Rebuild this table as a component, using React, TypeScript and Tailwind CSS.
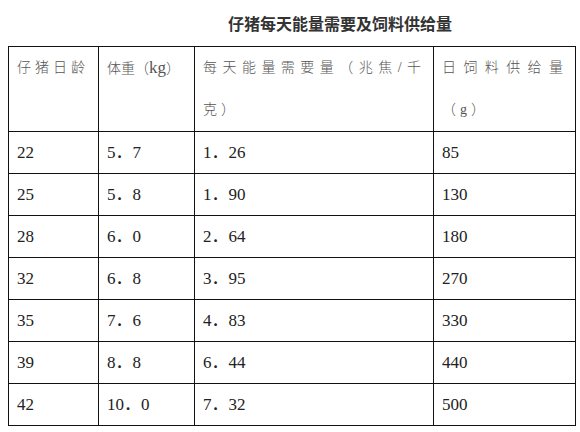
const rows = [
  ["22", "5．7", "1．26", "85"],
  ["25", "5．8", "1．90", "130"],
  ["28", "6．0", "2．64", "180"],
  ["32", "6．8", "3．95", "270"],
  ["35", "7．6", "4．83", "330"],
  ["39", "8．8", "6．44", "440"],
  ["42", "10．0", "7．32", "500"],
];

const cell = "border border-[#111] align-top px-[8px]";

export default function App() {
  return (
    <div
      className="w-[580px] h-[432px] bg-white overflow-hidden"
      style={{ fontFamily: '"Liberation Serif", "Noto Sans CJK SC", serif' }}
    >
      <div className="h-[46px] flex items-center pl-[228px]">
        <h1
          className="text-[16px] font-bold text-[#333] leading-none"
          style={{ fontFamily: '"Noto Sans CJK SC", sans-serif' }}
        >
          仔猪每天能量需要及饲料供给量
        </h1>
      </div>
      <table className="ml-[8px] w-[567px] table-fixed border-collapse">
        <colgroup>
          <col className="w-[90px]" />
          <col className="w-[96px]" />
          <col className="w-[239px]" />
          <col className="w-[142px]" />
        </colgroup>
        <thead>
          <tr className="text-[14px] leading-[42px] text-[#555] font-light">
            <th className={`${cell} text-left font-light tracking-[4px] whitespace-nowrap`}>仔猪日龄</th>
            <th className={`${cell} text-left font-light whitespace-nowrap h-[84px]`}>
              体重（<span className="text-[17px]">kg</span>）
            </th>
            <th className={`${cell} text-justify font-light tracking-[4px]`}>每天能量需要量（兆焦/千克）</th>
            <th className={`${cell} text-justify font-light tracking-[4px]`}>日饲料供给量（g）</th>
          </tr>
        </thead>
        <tbody>
          {rows.map((r) => (
            <tr key={r[0]} className="h-[42px] text-[17px] text-[#222]">
              {r.map((v, i) => (
                <td key={i} className="border border-[#111] px-[8px] align-middle">
                  {v}
                </td>
              ))}
            </tr>
          ))}
        </tbody>
      </table>
    </div>
  );
}
